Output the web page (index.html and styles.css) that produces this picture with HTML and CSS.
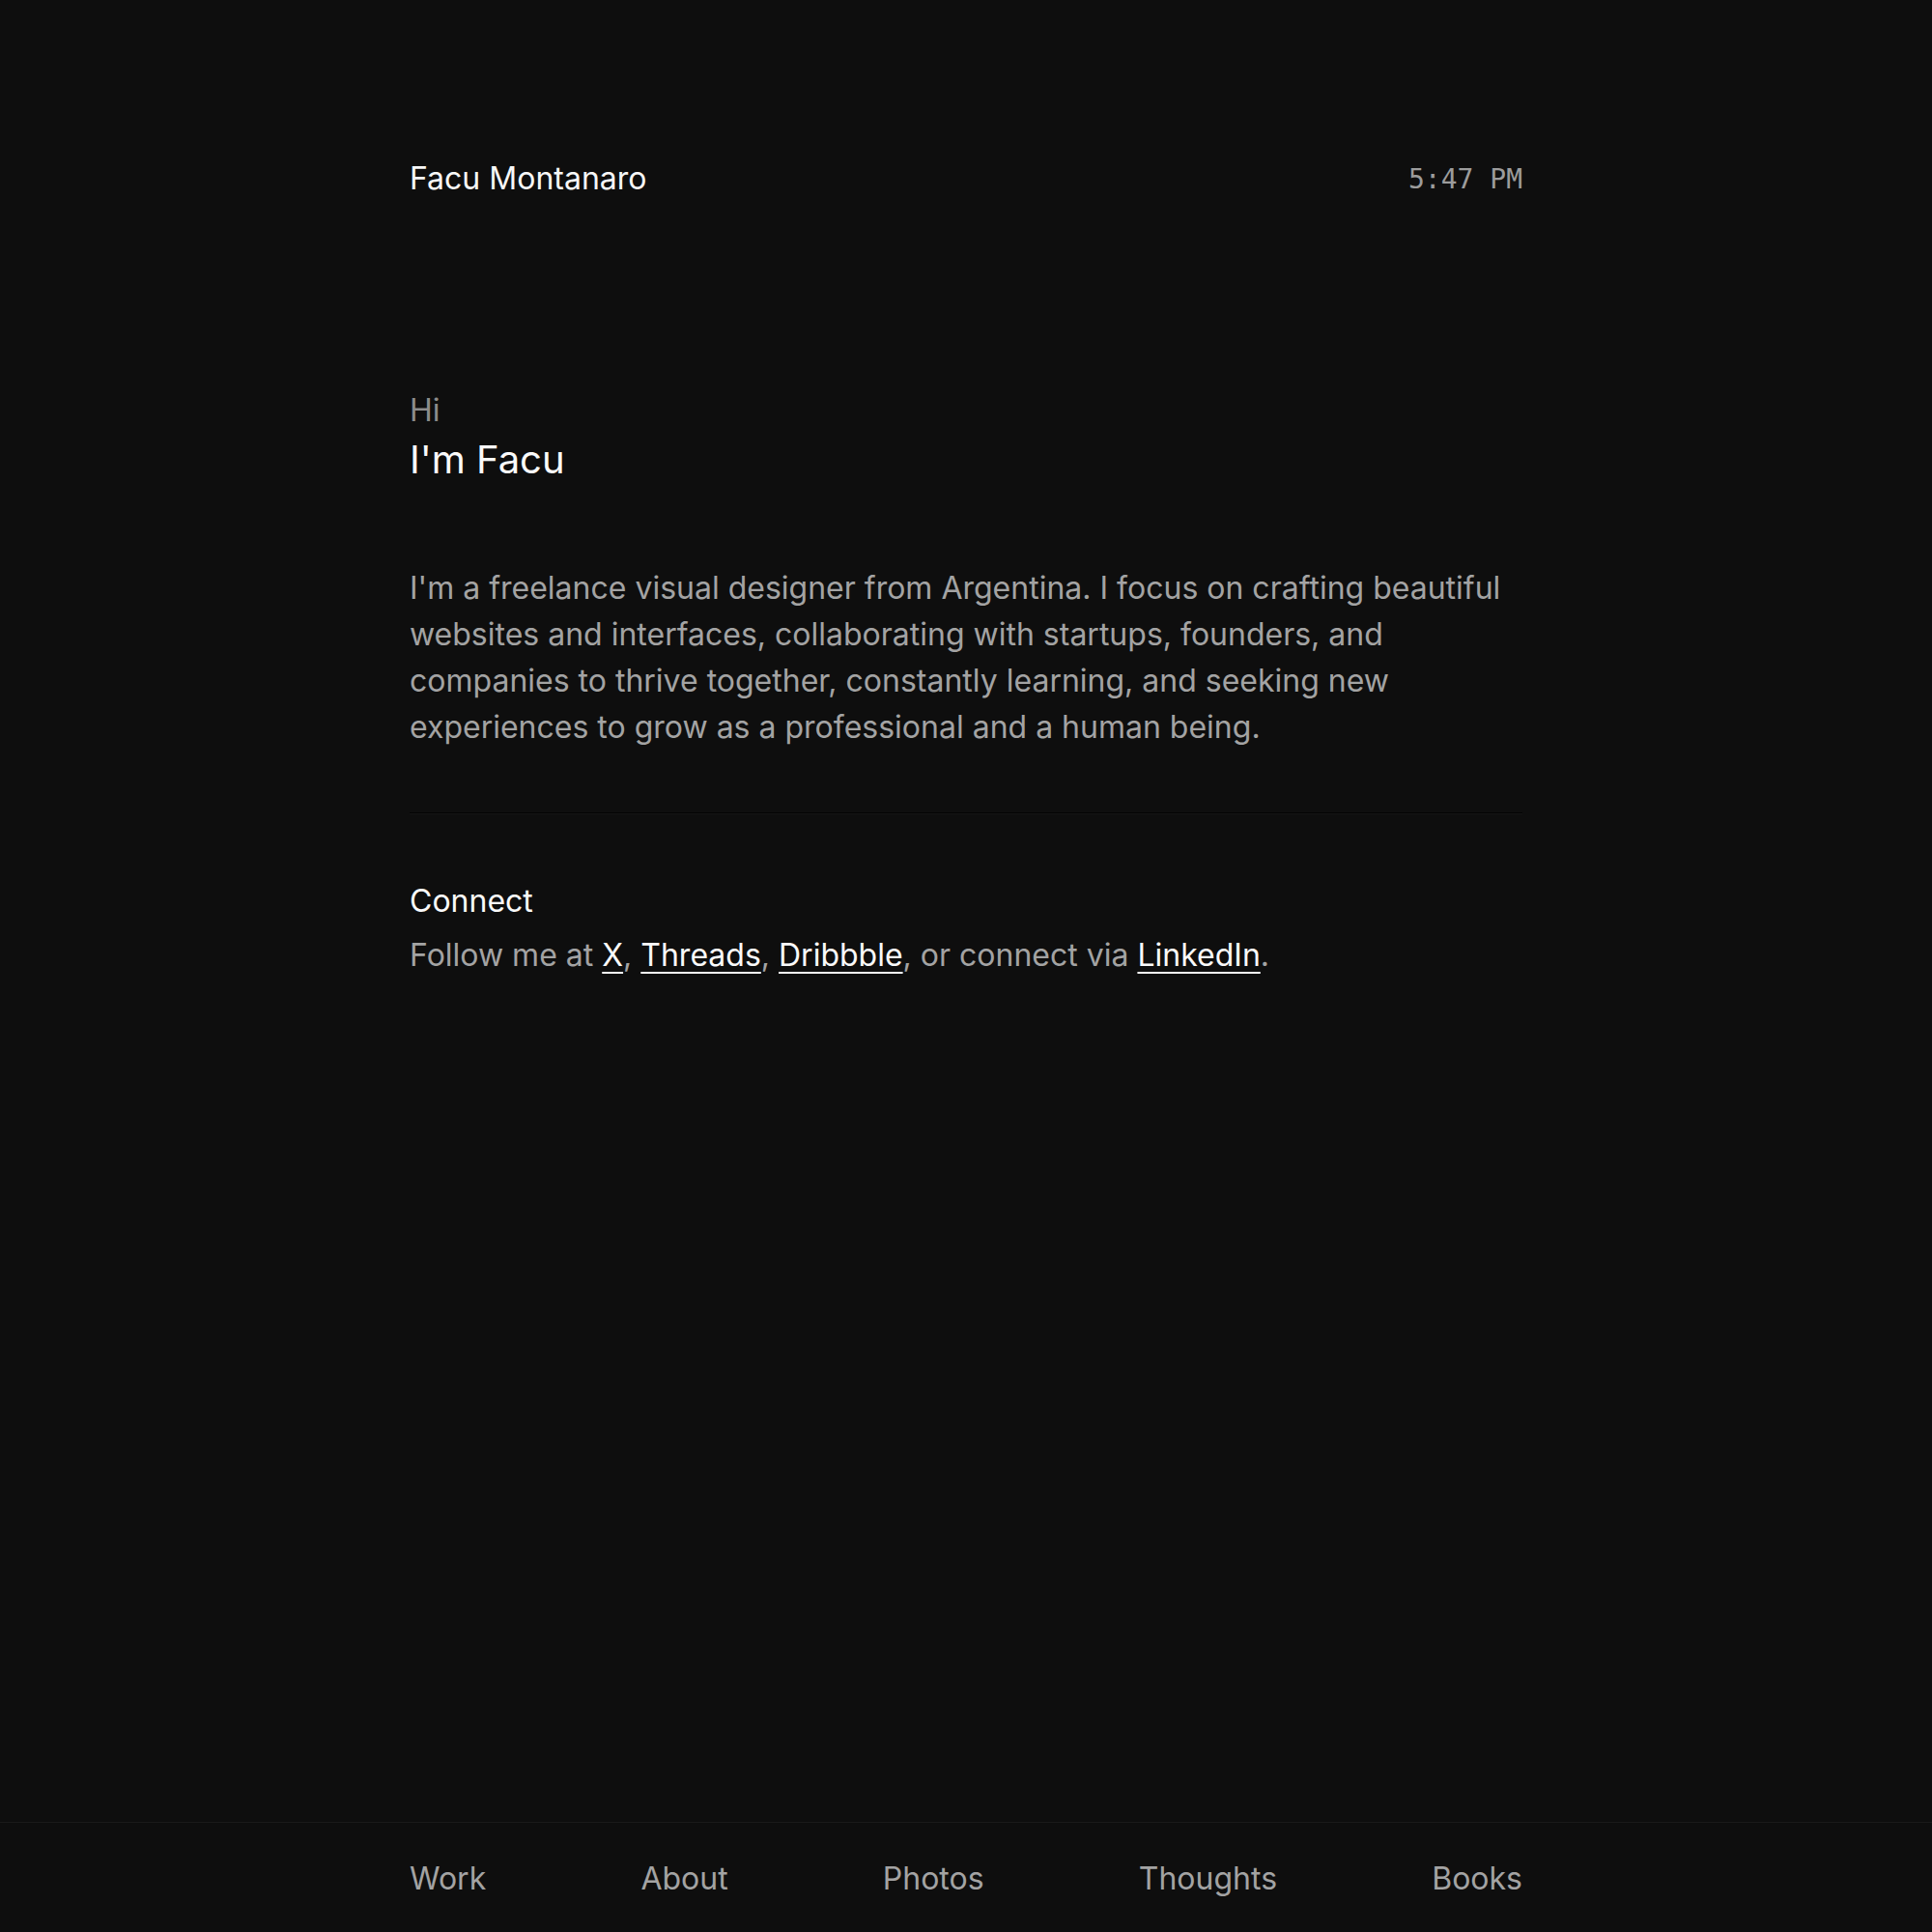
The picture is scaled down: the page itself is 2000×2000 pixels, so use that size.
FILE: index.html
```html
<!DOCTYPE html>
<html lang="en">
<head>
<meta charset="utf-8">
<title>Facu Montanaro</title>
<link rel="stylesheet" href="styles.css">
</head>
<body>
<div class="page">
  <main class="container">
    <header class="header">
      <span class="name">Facu Montanaro</span>
      <span class="time">5:47 PM</span>
    </header>
    <section class="hero">
      <p class="hi">Hi</p>
      <h1 class="title">I'm Facu</h1>
      <p class="intro">I'm a freelance visual designer from Argentina. I focus on crafting beautiful websites and interfaces, collaborating with startups, founders, and companies to thrive together, constantly learning, and seeking new experiences to grow as a professional and a human being.</p>
    </section>
    <hr class="divider">
    <section class="connect">
      <h2 class="connect-title">Connect</h2>
      <p class="connect-text">Follow me at <a href="#">X</a>, <a href="#">Threads</a>, <a href="#">Dribbble</a>, or connect via <a href="#">LinkedIn</a>.</p>
    </section>
  </main>
  <footer class="footer">
    <nav class="nav">
      <a href="#">Work</a>
      <a href="#">About</a>
      <a href="#">Photos</a>
      <a href="#">Thoughts</a>
      <a href="#">Books</a>
    </nav>
  </footer>
</div>
</body>
</html>
```
FILE: styles.css
```css
* { box-sizing: border-box; }
html, body {
  margin: 0;
  padding: 0;
  background: #0e0e0e;
}
body {
  font-family: Inter, "Noto Sans", sans-serif;
  color: #f5f5f5;
}
.page {
  min-height: 100vh;
  display: flex;
  flex-direction: column;
}
.container {
  width: 1152px;
  margin: 0 auto;
  flex: 1;
}
.header {
  padding-top: 161px;
  height: 209px;
  display: flex;
  justify-content: space-between;
  align-items: center;
}
.name {
  font-size: 32px;
  line-height: 48px;
  color: #f7f7f7;
}
.time {
  font-family: "DejaVu Sans Mono", monospace;
  font-size: 28px;
  line-height: 48px;
  padding-top: 2px;
  color: #9c9c9c;
}
.hero { margin-top: 194px; }
.hi {
  margin: 0;
  font-size: 32px;
  line-height: 44px;
  color: #8c8c8c;
}
.title {
  margin: 1px 0 0;
  font-weight: 400;
  font-size: 40px;
  line-height: 56px;
  color: #fafafa;
}
.intro {
  margin: 81px 0 0;
  font-size: 32px;
  line-height: 48px;
  color: #a3a3a3;
}
.divider {
  margin: 64px 0 0;
  border: 0;
  height: 2px;
  border-top: 1px solid #030303;
  border-bottom: 1px solid #161616;
}
.connect { margin-top: 70px; }
.connect-title {
  margin: 0;
  font-weight: 400;
  font-size: 32px;
  line-height: 40px;
  color: #fafafa;
}
.connect-text {
  margin: 12px 0 0;
  font-size: 32px;
  line-height: 48px;
  color: #a3a3a3;
}
.connect-text a {
  color: #fafafa;
  text-decoration: underline;
  text-underline-offset: 6px;
  text-decoration-thickness: 2px;
}
.footer {
  border-top: 1px solid #1a1a1a;
  height: 114px;
  display: flex;
  align-items: center;
  padding-top: 2px;
}
.nav {
  width: 1152px;
  margin: 0 auto;
  display: flex;
  justify-content: space-between;
}
.nav a {
  font-size: 32px;
  line-height: 48px;
  color: #a3a3a3;
  text-decoration: none;
}
```
